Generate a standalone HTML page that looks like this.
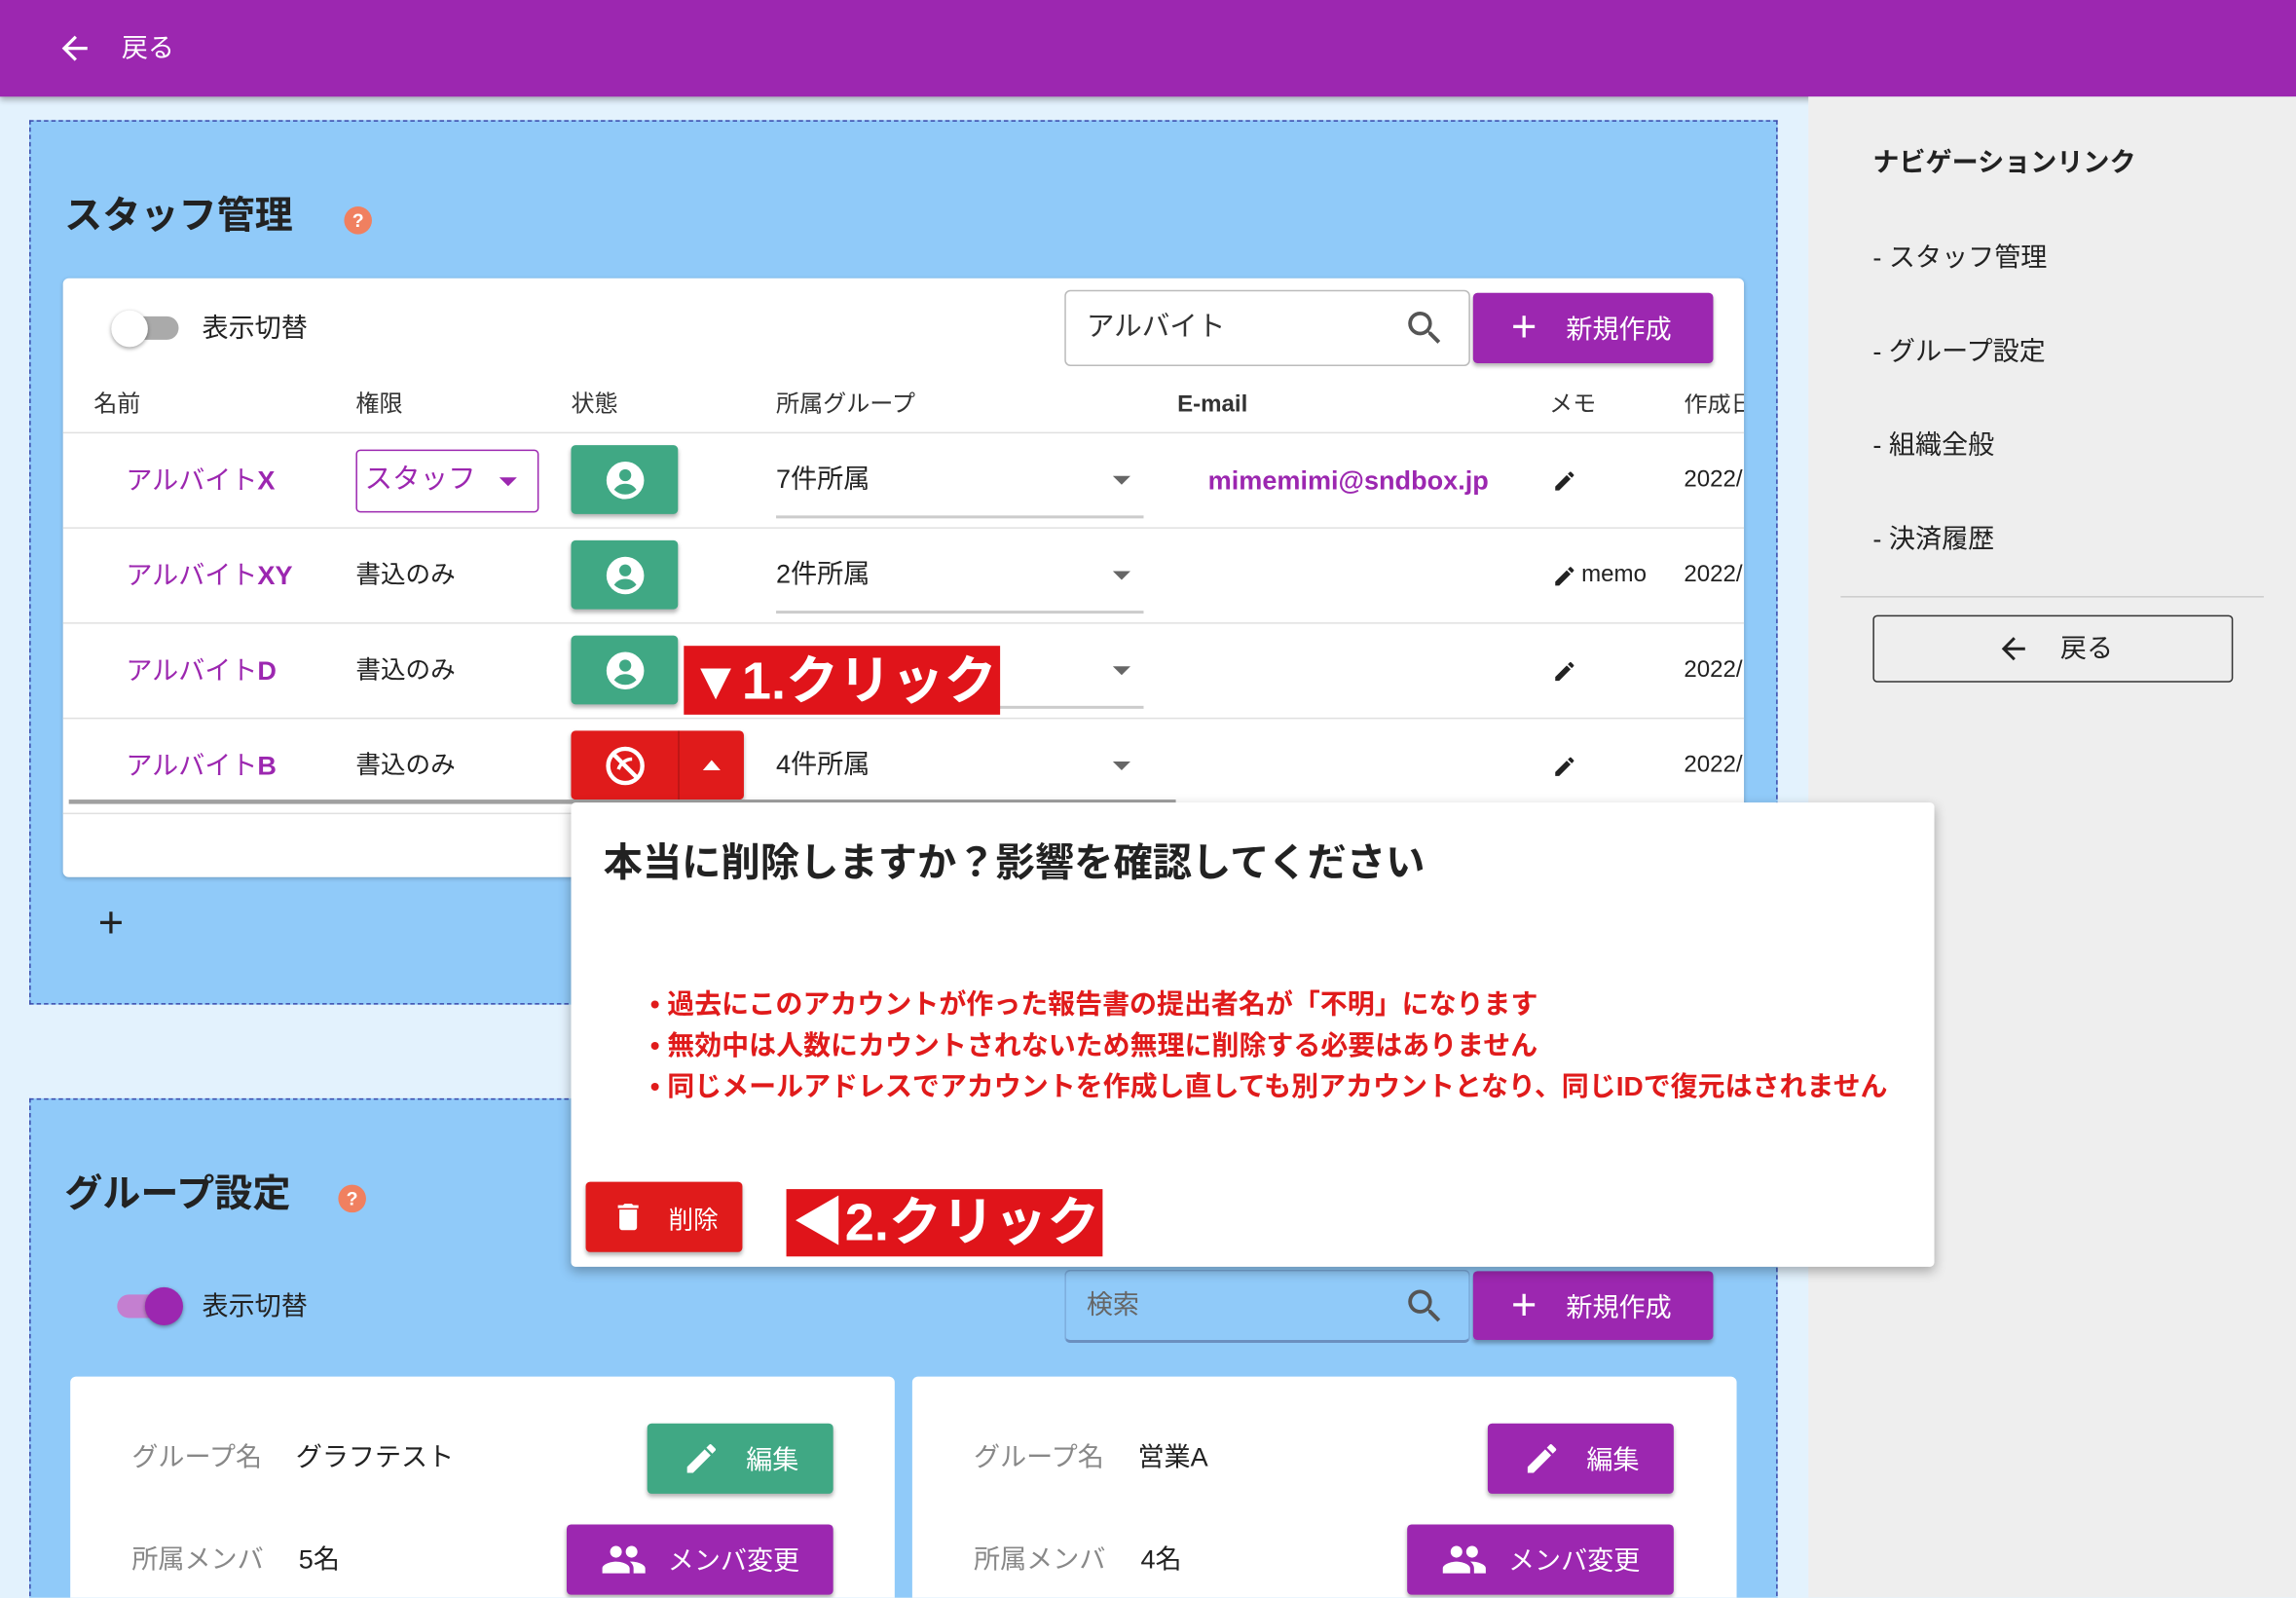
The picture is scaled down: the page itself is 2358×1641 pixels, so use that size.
<!DOCTYPE html>
<html><head><meta charset="utf-8">
<style>
*{box-sizing:border-box;margin:0;padding:0}
html,body{width:2358px;height:1640px;overflow:hidden;background:#e3f2fd}
#w{position:absolute;left:0;top:0;width:1568px;height:1091px;transform:scale(1.50383);transform-origin:0 0;font-family:"Liberation Sans","Noto Sans CJK JP",sans-serif;color:#222;overflow:hidden}
.a{position:absolute}
.t{position:absolute;white-space:nowrap;line-height:1}
.btn{position:absolute;border-radius:3px;box-shadow:0 2px 3px rgba(0,0,0,.3);color:#fff;display:flex;align-items:center;justify-content:center;font-size:18px}
.pur{background:#9c27b0}.grn{background:#40a884}.red{background:#e01b1b}
.sep{position:absolute;left:43px;width:1148px;height:1px;background:#e0e0e0}
.nm{color:#9c27b0;font-size:18px}
.arr{position:absolute;width:0;height:0;border-left:6px solid transparent;border-right:6px solid transparent;border-top:6px solid #666}
.ul{position:absolute;height:2px;background:#ccc}
</style></head><body><div id="w">
<div class="a" style="left:0;top:0;width:1568px;height:66px;background:#9c27b0;box-shadow:0 2px 4px rgba(0,0,0,.3)"></div>
<svg class="a" style="left:38px;top:20px" width="26" height="26" viewBox="0 0 24 24"><path d="M20 11H7.8l5.6-5.6L12 4l-8 8 8 8 1.4-1.4L7.8 13H20z" fill="#fff"/></svg>
<div class="t" style="left:83px;top:24px;color:#fff;font-size:18px">戻る</div>
<div class="a" style="left:1235px;top:66px;width:333px;height:1025px;background:#eeeeee"></div>
<div class="t" style="left:1279px;top:102px;font-size:18px;font-weight:bold">ナビゲーションリンク</div>
<div class="t" style="left:1279px;top:167px;font-size:18px">- スタッフ管理</div>
<div class="t" style="left:1279px;top:231px;font-size:18px">- グループ設定</div>
<div class="t" style="left:1279px;top:295px;font-size:18px">- 組織全般</div>
<div class="t" style="left:1279px;top:359px;font-size:18px">- 決済履歴</div>
<div class="a" style="left:1257px;top:407px;width:289px;height:1px;background:#ccc"></div>
<div class="a" style="left:1279px;top:420px;width:246px;height:46px;border:1.5px solid #333;border-radius:3px"></div>
<svg class="a" style="left:1363px;top:431px" width="24" height="24" viewBox="0 0 24 24"><path d="M20 11H7.8l5.6-5.6L12 4l-8 8 8 8 1.4-1.4L7.8 13H20z" fill="#222"/></svg>
<div class="t" style="left:1407px;top:434px;font-size:18px">戻る</div>

<div class="a" style="left:20px;top:82px;width:1194px;height:604px;background:#90caf9;border:1px dashed #3949ab"></div>
<div class="t" style="left:44px;top:134px;font-size:26px;font-weight:bold">スタッフ管理</div>
<div class="a" style="left:235px;top:141px;width:19px;height:19px;border-radius:50%;background:#f08060;color:#fff;font-size:13px;text-align:center;line-height:19px;font-weight:bold">?</div>
<div class="a" style="left:43px;top:190px;width:1148px;height:409px;background:#fff;border-radius:4px;box-shadow:0 1px 3px rgba(0,0,0,.2);overflow:hidden"></div>
<div class="a" style="left:86px;top:216px;width:36px;height:16px;border-radius:8px;background:#aaa"></div>
<div class="a" style="left:76px;top:212px;width:25px;height:25px;border-radius:50%;background:#fff;box-shadow:0 1px 3px rgba(0,0,0,.4)"></div>
<div class="t" style="left:138px;top:215px;font-size:18px">表示切替</div>
<div class="a" style="left:727px;top:198px;width:277px;height:52px;border:1px solid #bbb;border-radius:4px;background:#fff"></div>
<div class="t" style="left:742px;top:214px;font-size:19px;color:#333">アルバイト</div>
<svg class="a" style="left:958px;top:209px" width="30" height="30" viewBox="0 0 24 24"><path d="M15.5 14h-.8l-.3-.3A6.5 6.5 0 1 0 9.5 16a6.5 6.5 0 0 0 4.2-1.6l.3.3v.8l5 5 1.5-1.5-5-5zm-6 0a4.5 4.5 0 1 1 0-9 4.5 4.5 0 0 1 0 9z" fill="#555"/></svg>
<div class="btn pur" style="left:1006px;top:200px;width:164px;height:48px;justify-content:flex-start;padding-left:26px"><span style="font-size:30px;font-weight:300;margin-right:20px;line-height:1">+</span>新規作成</div>
<div class="t" style="left:64px;top:269px;font-size:16px;color:#333">名前</div>
<div class="t" style="left:243px;top:269px;font-size:16px;color:#333">権限</div>
<div class="t" style="left:390px;top:269px;font-size:16px;color:#333">状態</div>
<div class="t" style="left:530px;top:269px;font-size:16px;color:#333">所属グループ</div>
<div class="t" style="left:804px;top:269px;font-size:16px;font-weight:bold;color:#333">E-mail</div>
<div class="t" style="left:1058px;top:269px;font-size:16px;color:#333">メモ</div>
<div class="a" style="left:1150px;top:269px;width:41px;overflow:hidden;font-size:16px;color:#333;white-space:nowrap;line-height:1">作成日</div>
<div class="sep" style="top:295px"></div>
<div class="sep" style="top:360px"></div>
<div class="sep" style="top:425px"></div>
<div class="sep" style="top:490px"></div>
<div class="sep" style="top:555px"></div>
<div class="t nm" style="left:86px;top:319px">アルバイト<b>X</b></div>
<div class="t nm" style="left:86px;top:384px">アルバイト<b>XY</b></div>
<div class="t nm" style="left:86px;top:449px">アルバイト<b>D</b></div>
<div class="t nm" style="left:86px;top:514px">アルバイト<b>B</b></div>
<div class="a" style="left:243px;top:307px;width:125px;height:43px;border:1.5px solid #9c27b0;border-radius:3px"></div>
<div class="t" style="left:249px;top:318px;font-size:19px;color:#9c27b0">スタッフ</div>
<div class="arr" style="left:341px;top:326px;border-top-color:#9c27b0"></div>
<div class="t" style="left:243px;top:384px;font-size:17px">書込のみ</div>
<div class="t" style="left:243px;top:449px;font-size:17px">書込のみ</div>
<div class="t" style="left:243px;top:514px;font-size:17px">書込のみ</div>
<svg width="0" height="0" style="position:absolute"><defs><g id="acc"><circle cx="12" cy="12" r="11" fill="#fff"/><circle cx="12" cy="9" r="3.5" fill="#40a884"/><path d="M5.5 17.5c1.5-2.5 4-3.5 6.5-3.5s5 1 6.5 3.5a9 9 0 0 1-13 0z" fill="#40a884"/></g></defs></svg>
<div class="btn grn" style="left:390px;top:304px;width:73px;height:47px"><svg width="28" height="28" viewBox="0 0 24 24"><use href="#acc"/></svg></div>
<div class="btn grn" style="left:390px;top:369px;width:73px;height:47px"><svg width="28" height="28" viewBox="0 0 24 24"><use href="#acc"/></svg></div>
<div class="btn grn" style="left:390px;top:434px;width:73px;height:47px"><svg width="28" height="28" viewBox="0 0 24 24"><use href="#acc"/></svg></div>
<div class="btn red" style="left:390px;top:499px;width:118px;height:47px;justify-content:flex-start">
 <div style="width:74px;display:flex;justify-content:center;border-right:1px solid rgba(0,0,0,.2);height:47px;align-items:center"><svg width="28" height="28" viewBox="0 0 24 24"><circle cx="12" cy="12" r="10" fill="none" stroke="#fff" stroke-width="2.5"/><path d="M5 5l14 14" stroke="#fff" stroke-width="2.5"/><path d="M8 14c1-3 4-6 8-6" stroke="#fff" stroke-width="2" fill="none"/></svg></div>
 <div style="width:0;height:0;border-left:6px solid transparent;border-right:6px solid transparent;border-bottom:7px solid #fff;margin-left:16px"></div>
</div>
<div class="t" style="left:530px;top:318px;font-size:18px">7件所属</div>
<div class="t" style="left:530px;top:383px;font-size:18px">2件所属</div>
<div class="t" style="left:530px;top:513px;font-size:18px">4件所属</div>
<div class="arr" style="left:760px;top:325px"></div>
<div class="arr" style="left:760px;top:390px"></div>
<div class="arr" style="left:760px;top:455px"></div>
<div class="arr" style="left:760px;top:520px"></div>
<div class="ul" style="left:530px;top:352px;width:251px"></div>
<div class="ul" style="left:530px;top:417px;width:251px"></div>
<div class="ul" style="left:530px;top:482px;width:251px"></div>
<div class="t" style="left:825px;top:319px;font-size:18px;font-weight:bold;color:#9c27b0">mimemimi@sndbox.jp</div>
<svg width="0" height="0" style="position:absolute"><defs><path id="pen" d="M3 17.25V21h3.75L17.81 9.94l-3.750-3.75L3 17.25zM20.71 7.04a1 1 0 0 0 0-1.41l-2.34-2.34a1 1 0 0 0-1.41 0l-1.830 1.83 3.75 3.75 1.83-1.83z"/></defs></svg>
<svg class="a" style="left:1060px;top:320px" width="17" height="17" viewBox="0 0 24 24"><use href="#pen" fill="#222"/></svg>
<svg class="a" style="left:1060px;top:385px" width="17" height="17" viewBox="0 0 24 24"><use href="#pen" fill="#222"/></svg>
<div class="t" style="left:1080px;top:385px;font-size:16px">memo</div>
<svg class="a" style="left:1060px;top:450px" width="17" height="17" viewBox="0 0 24 24"><use href="#pen" fill="#222"/></svg>
<svg class="a" style="left:1060px;top:515px" width="17" height="17" viewBox="0 0 24 24"><use href="#pen" fill="#222"/></svg>
<div class="a" style="left:1150px;top:320px;width:41px;overflow:hidden;font-size:16px;line-height:1">2022/</div>
<div class="a" style="left:1150px;top:385px;width:41px;overflow:hidden;font-size:16px;line-height:1">2022/</div>
<div class="a" style="left:1150px;top:450px;width:41px;overflow:hidden;font-size:16px;line-height:1">2022/</div>
<div class="a" style="left:1150px;top:515px;width:41px;overflow:hidden;font-size:16px;line-height:1">2022/</div>
<div class="a" style="left:47px;top:546px;width:756px;height:3px;background:#a0a0a0"></div>
<div class="t" style="left:67px;top:616px;font-size:30px;font-weight:300">+</div>
<div class="a" style="left:467px;top:441px;width:216px;height:47px;background:#e0141a;color:#fff;font-weight:bold;font-size:36px;line-height:47px;white-space:nowrap;padding-left:4px">▼1.クリック</div>

<div class="a" style="left:20px;top:750px;width:1194px;height:360px;background:#90caf9;border:1px dashed #3949ab"></div>
<div class="t" style="left:44px;top:802px;font-size:26px;font-weight:bold">グループ設定</div>
<div class="a" style="left:231px;top:809px;width:19px;height:19px;border-radius:50%;background:#f08060;color:#fff;font-size:13px;text-align:center;line-height:19px;font-weight:bold">?</div>
<div class="a" style="left:80px;top:884px;width:36px;height:16px;border-radius:8px;background:#c47fd0"></div>
<div class="a" style="left:99px;top:879px;width:26px;height:26px;border-radius:50%;background:#9c27b0;box-shadow:0 1px 3px rgba(0,0,0,.4)"></div>
<div class="t" style="left:138px;top:883px;font-size:18px">表示切替</div>
<div class="a" style="left:727px;top:867px;width:277px;height:50px;border:1px solid #7aa8d8;border-bottom:2px solid #6b8fbf;border-radius:4px"></div>
<div class="t" style="left:742px;top:882px;font-size:18px;color:#666">検索</div>
<svg class="a" style="left:958px;top:877px" width="30" height="30" viewBox="0 0 24 24"><path d="M15.5 14h-.8l-.3-.3A6.5 6.5 0 1 0 9.5 16a6.5 6.5 0 0 0 4.2-1.6l.3.3v.8l5 5 1.5-1.5-5-5zm-6 0a4.5 4.5 0 1 1 0-9 4.5 4.5 0 0 1 0 9z" fill="#555"/></svg>
<div class="btn pur" style="left:1006px;top:868px;width:164px;height:47px;justify-content:flex-start;padding-left:26px"><span style="font-size:30px;font-weight:300;margin-right:20px;line-height:1">+</span>新規作成</div>
<div class="a" style="left:48px;top:940px;width:563px;height:200px;background:#fff;border-radius:4px"></div>
<div class="a" style="left:623px;top:940px;width:563px;height:200px;background:#fff;border-radius:4px"></div>
<div class="t" style="left:90px;top:986px;font-size:18px;color:#888">グループ名</div>
<div class="t" style="left:202px;top:986px;font-size:18px">グラフテスト</div>
<div class="t" style="left:90px;top:1056px;font-size:18px;color:#888">所属メンバ</div>
<div class="t" style="left:204px;top:1056px;font-size:18px">5名</div>
<div class="t" style="left:665px;top:986px;font-size:18px;color:#888">グループ名</div>
<div class="t" style="left:777px;top:986px;font-size:18px">営業A</div>
<div class="t" style="left:665px;top:1056px;font-size:18px;color:#888">所属メンバ</div>
<div class="t" style="left:779px;top:1056px;font-size:18px">4名</div>
<div class="btn grn" style="left:442px;top:972px;width:127px;height:48px"><svg width="26" height="26" viewBox="0 0 24 24" style="margin-right:18px"><use href="#pen" fill="#fff"/></svg>編集</div>
<div class="btn pur" style="left:1016px;top:972px;width:127px;height:48px"><svg width="26" height="26" viewBox="0 0 24 24" style="margin-right:18px"><use href="#pen" fill="#fff"/></svg>編集</div>
<svg width="0" height="0" style="position:absolute"><defs><path id="grp" d="M16 11c1.66 0 2.99-1.34 2.99-3S17.66 5 16 5s-3 1.34-3 3 1.34 3 3 3zm-8 0c1.66 0 2.99-1.34 2.99-3S9.66 5 8 5 5 6.34 5 8s1.34 3 3 3zm0 2c-2.33 0-7 1.17-7 3.5V19h14v-2.5C15 14.17 10.33 13 8 13zm8 0c-.29 0-.62.02-.97.05 1.16.84 1.970 1.97 1.970 3.45V19h6v-2.5c0-2.33-4.67-3.5-7-3.5z"/></defs></svg>
<div class="btn pur" style="left:387px;top:1041px;width:182px;height:48px"><svg width="32" height="32" viewBox="0 0 24 24" style="margin-right:14px"><use href="#grp" fill="#fff"/></svg>メンバ変更</div>
<div class="btn pur" style="left:961px;top:1041px;width:182px;height:48px"><svg width="32" height="32" viewBox="0 0 24 24" style="margin-right:14px"><use href="#grp" fill="#fff"/></svg>メンバ変更</div>

<div class="a" style="left:390px;top:548px;width:931px;height:317px;background:#fff;border-radius:3px;box-shadow:0 3px 8px rgba(0,0,0,.3)"></div>
<div class="t" style="left:412px;top:576px;font-size:26.8px;font-weight:bold">本当に削除しますか？影響を確認してください</div>
<div class="a" style="left:444px;top:672px;font-size:18.6px;font-weight:bold;color:#e01b1b;line-height:28px;white-space:nowrap">
<div>•&nbsp;過去にこのアカウントが作った報告書の提出者名が「不明」になります</div>
<div>•&nbsp;無効中は人数にカウントされないため無理に削除する必要はありません</div>
<div>•&nbsp;同じメールアドレスでアカウントを作成し直しても別アカウントとなり、同じIDで復元はされません</div>
</div>
<div class="btn red" style="left:400px;top:807px;width:107px;height:48px;font-size:17px"><svg width="24" height="26" viewBox="0 0 24 24" style="margin-right:16px"><path d="M6 19c0 1.1.9 2 2 2h8c1.1 0 2-.9 2-2V7H6v12zM19 4h-3.5l-1-1h-5l-1 1H5v2h14V4z" fill="#fff"/></svg>削除</div>
<div class="a" style="left:537px;top:812px;width:216px;height:46px;background:#e0141a;color:#fff;font-weight:bold;font-size:36px;line-height:46px;white-space:nowrap;padding-left:4px">◀2.クリック</div>
</div></body></html>
